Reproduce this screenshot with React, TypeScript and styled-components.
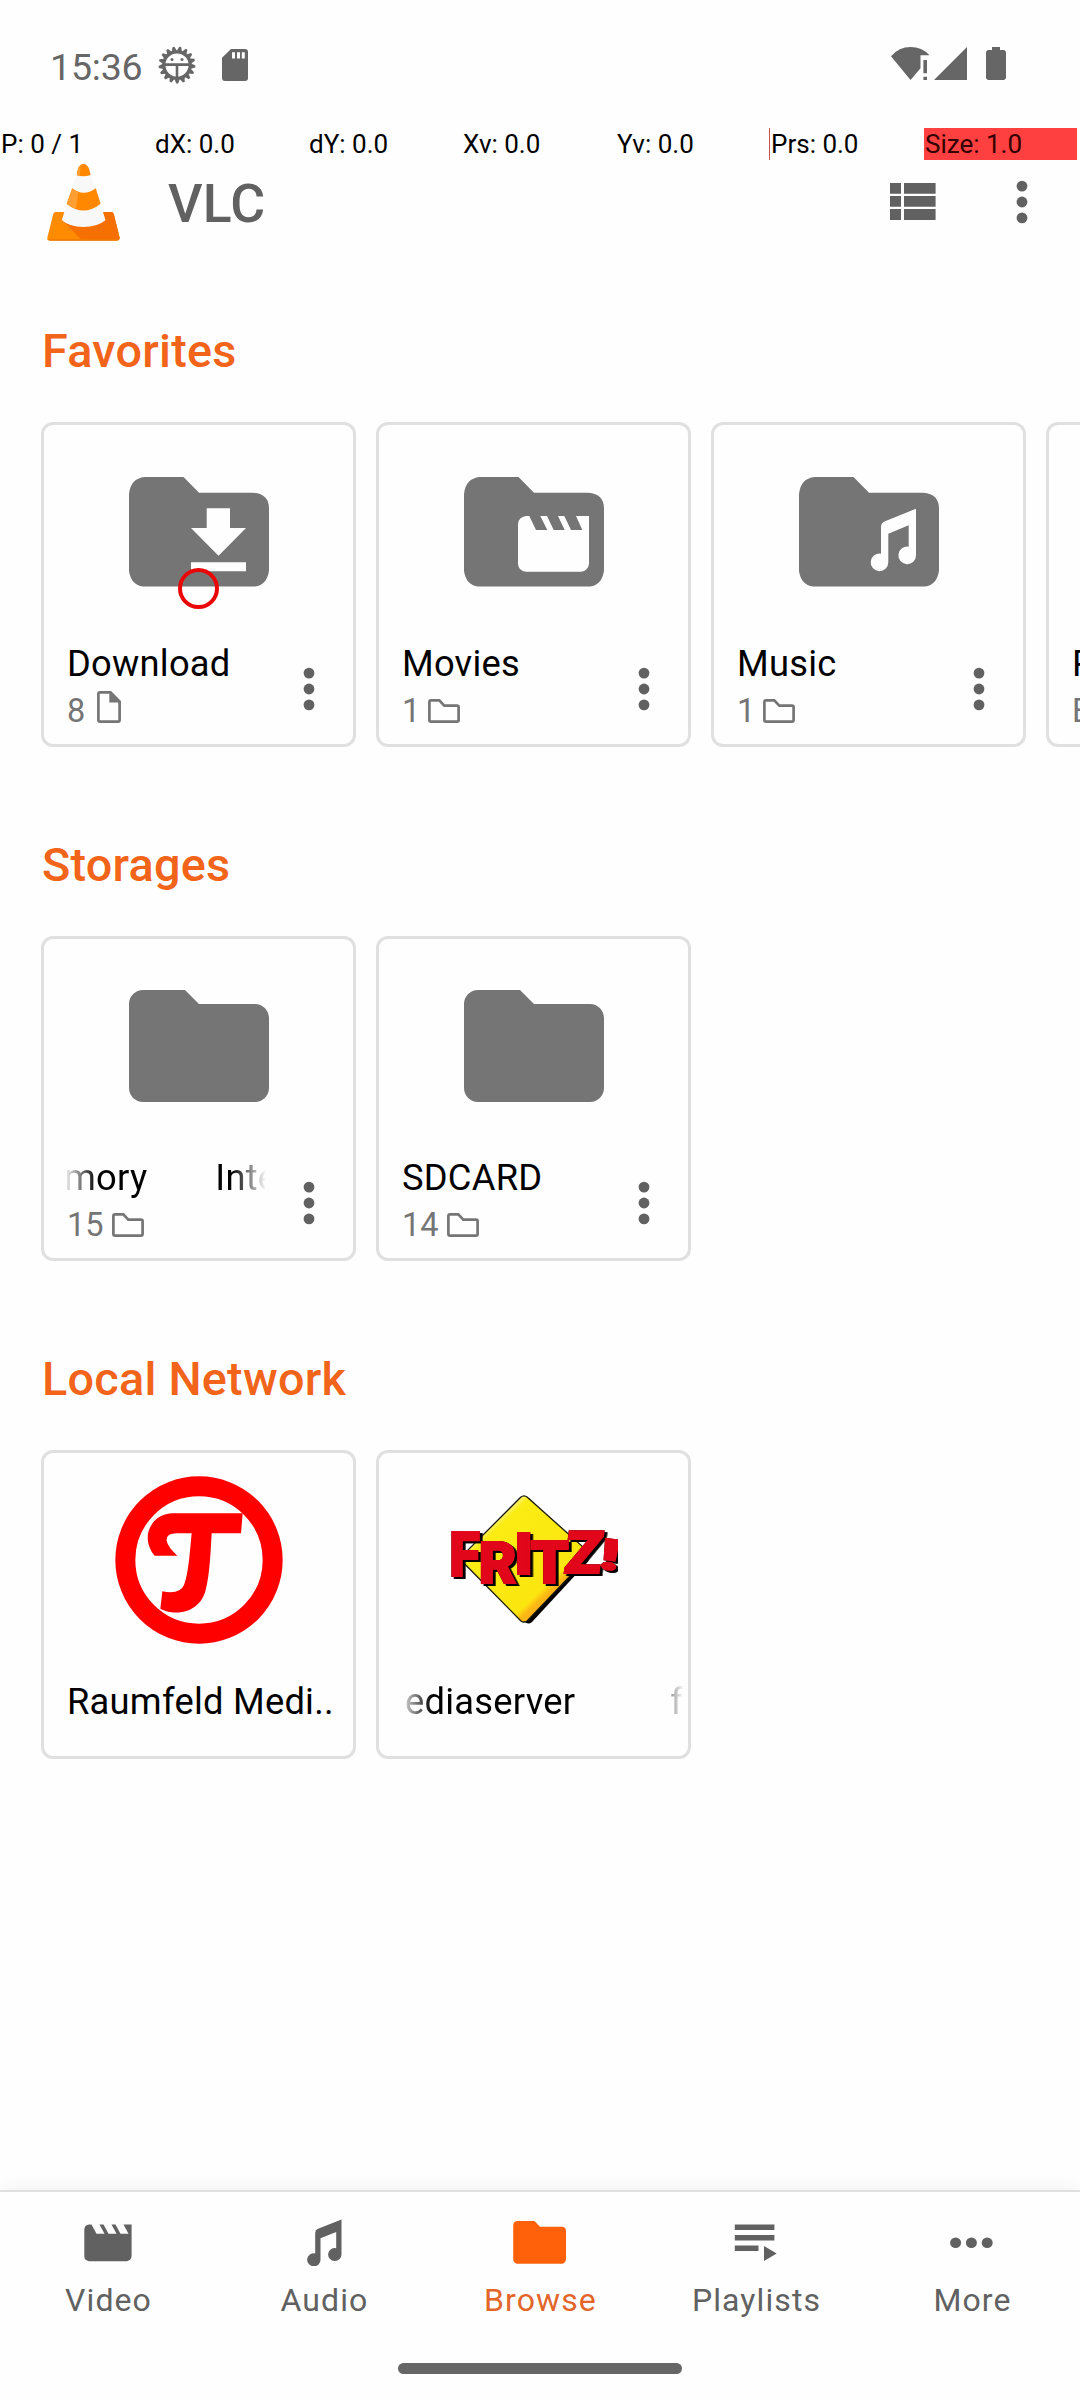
import React from 'react';
import styled, { createGlobalStyle } from 'styled-components';

const ORANGE = '#ff610a';
const GREY = '#616161';
const FOLDER_GREY = '#757575';

const GlobalStyle = createGlobalStyle`
  * { box-sizing: border-box; }
  body { margin: 0; background: #fefefe; overflow: hidden; }
  svg { display: block; flex: none; }
`;

const Screen = styled.div`
  position: relative;
  display: flex;
  flex-direction: column;
  width: 1080px;
  height: 2400px;
  overflow: hidden;
  background: #fefefe;
  font-family: Roboto, 'Noto Sans', sans-serif;
  color: #000;
`;

/* status bar */
const StatusBar = styled.header`
  display: flex;
  align-items: center;
  justify-content: space-between;
  height: 127px;
  padding: 0 74px 0 50px;
  color: #666;
`;
const StatusGroup = styled.div<{ $gap: number; $drop?: number }>`
  display: flex;
  align-items: center;
  gap: ${(p) => p.$gap}px;
  padding-top: ${(p) => p.$drop ?? 0}px;
`;
const Clock = styled.span`
  width: 93px;
  margin-right: -11px;
  padding-top: 3px;
  font-size: 37.5px;
  line-height: 46px;
  letter-spacing: -0.2px;
  white-space: nowrap;
`;
const BatterySlot = styled.span`
  display: flex;
  padding-left: 16px;
`;

/* pointer location overlay */
const PointerOverlay = styled.div`
  position: absolute;
  top: 128px;
  left: 0;
  display: flex;
  width: 1080px;
  gap: 1px;
`;
const PointerCell = styled.span<{ $fill?: boolean; $tick?: boolean }>`
  flex: 0 0 ${(p) => (p.$tick ? 154 : 153)}px;
  height: 32px;
  padding-left: 1px;
  border-left: ${(p) => (p.$tick ? '1px solid #c85050' : '0')};
  margin-left: ${(p) => (p.$tick ? -1 : 0)}px;
  background: ${(p) => (p.$fill ? '#ff4040' : 'transparent')};
  color: ${(p) => (p.$fill ? '#330000' : '#000')};
  font-size: 26px;
  line-height: 32px;
  white-space: nowrap;
`;
const TouchRing = styled.span`
  position: absolute;
  left: 178px;
  top: 567.5px;
  width: 41px;
  height: 41px;
  border: 4px solid #ea0606;
  border-radius: 50%;
`;

/* toolbar */
const Toolbar = styled.div`
  display: flex;
  align-items: center;
  height: 149px;
  padding: 0 52px 0 47px;
`;
const AppTitle = styled.h1`
  flex: 1;
  margin: 0 0 0 48px;
  padding-top: 4px;
  font-size: 53.5px;
  font-weight: 500;
  line-height: 64px;
  letter-spacing: 0.3px;
  color: ${GREY};
`;
const IconButton = styled.button`
  display: flex;
  padding: 0;
  border: 0;
  background: none;
  color: ${GREY};
  & + & { margin-left: 80px; }
`;

/* sections */
const Content = styled.main`
  flex: 1;
  padding: 45px 0 0 41px;
  overflow: hidden;
`;
const Section = styled.section`
  margin-bottom: 88px;
`;
const SectionTitle = styled.h2`
  margin: 0 0 41px;
  padding-left: 1px;
  font-size: 46.75px;
  font-weight: 500;
  line-height: 60px;
  letter-spacing: 0.25px;
  color: #f26419;
`;
const CardRow = styled.div`
  display: flex;
  gap: 20px;
`;
const Card = styled.article<{ $height: number }>`
  flex: 0 0 315px;
  display: flex;
  flex-direction: column;
  height: ${(p) => p.$height}px;
  padding-top: 23px;
  border: 3px solid #e0e0e0;
  border-radius: 12px;
  background: #fefefe;
`;
const Art = styled.div<{ $gap: number }>`
  display: flex;
  justify-content: center;
  height: 168px;
  margin-bottom: ${(p) => p.$gap}px;
  color: ${FOLDER_GREY};
`;
const Footer = styled.div`
  display: flex;
`;
const Labels = styled.div<{ $width: number }>`
  flex: 0 0 ${(p) => p.$width}px;
  width: ${(p) => p.$width}px;
  margin-left: 23px;
  overflow: hidden;
`;
const Name = styled.div<{ $fade?: boolean }>`
  display: flex;
  font-size: 36.3px;
  line-height: 44px;
  letter-spacing: 0.25px;
  white-space: pre;
  overflow: hidden;
  ${(p) =>
    p.$fade &&
    `mask-image: linear-gradient(to right, rgba(0,0,0,.1), #000 30px, #000 calc(100% - 34px), transparent);`}
`;
const Loop = styled.span<{ $shift: number; $gap: number }>`
  flex: none;
  margin-left: ${(p) => p.$shift}px;
  margin-right: ${(p) => p.$gap}px;
`;
const Count = styled.div`
  display: flex;
  align-items: flex-end;
  gap: 8px;
  margin-top: 5px;
  height: 40px;
  font-size: 32.5px;
  line-height: 40px;
  color: ${FOLDER_GREY};
  svg { margin-bottom: 8px; }
`;
const CardMenu = styled.button`
  display: flex;
  align-items: center;
  justify-content: center;
  width: 86px;
  height: 93px;
  padding: 0;
  border: 0;
  background: none;
  color: ${GREY};
`;

/* bottom navigation */
const BottomNav = styled.nav`
  display: flex;
  height: 210px;
  border-top: 2px solid #dedfde;
  box-shadow: 0 -4px 14px rgba(0, 0, 0, 0.045);
  background: #fefefe;
`;
const NavItem = styled.a<{ $active?: boolean }>`
  flex: 1;
  display: flex;
  flex-direction: column;
  align-items: center;
  padding-top: 17.5px;
  color: ${(p) => (p.$active ? ORANGE : GREY)};
`;
const NavLabel = styled.span<{ $active?: boolean }>`
  margin-top: 14.5px;
  padding-left: 1px;
  font-size: 32px;
  line-height: 40px;
  letter-spacing: 1.1px;
  color: ${(p) => (p.$active ? '#e2662a' : 'inherit')};
`;
const HomePill = styled.span`
  position: absolute;
  left: 398px;
  bottom: 26px;
  width: 284px;
  height: 11px;
  border-radius: 6px;
  background: #666;
`;

const Dots = () => (
  <svg width="12" height="44" viewBox="0 0 12 44" fill="currentColor">
    <circle cx="6" cy="6.1" r="5.4" />
    <circle cx="6" cy="22" r="5.4" />
    <circle cx="6" cy="37.9" r="5.4" />
  </svg>
);

const TEETH = Array.from({ length: 17 }, (_, i) => i);

const DebugGear = () => (
  <svg width="38" height="38" viewBox="-19 -19 38 38">
    {TEETH.map((i) => (
      <path key={i} d="M-2.6-14L-1-18.4H1L2.6-14Z" fill="currentColor" transform={`rotate(${(i * 360) / 17 + 10})`} />
    ))}
    <circle r="13.2" fill="none" stroke="currentColor" strokeWidth="3.2" />
    <path d="M-13-.4H13M0-.4V13" stroke="currentColor" strokeWidth="2.6" fill="none" />
    <circle cx="-5" cy="-5.4" r="1.5" fill="currentColor" />
    <circle cx="5" cy="-5.4" r="1.5" fill="currentColor" />
  </svg>
);

const SdCard = () => (
  <svg width="26" height="32" viewBox="0 0 26 33" preserveAspectRatio="none">
    <path fill="currentColor" d="M9 0H23Q26 0 26 3V30Q26 33 23 33H3Q0 33 0 30V9Z" />
    <path fill="#fefefe" d="M10 3.3h3v6.5h-3zM15 3.3h3v6.5h-3zM19.8 3.3h3v6.5h-3z" />
  </svg>
);

const Wifi = () => (
  <svg width="39" height="33" viewBox="0 0 39 34" preserveAspectRatio="none" fill="currentColor">
    <path d="M0 9.5Q8 0 19.5 0T38.5 8.5H29.500V22L19.500 34Z" />
    <path d="M32.400 13.500h3.600v13.500h-3.600zM32.400 30.600h3.600v3.400h-3.600z" />
  </svg>
);

const Signal = () => (
  <svg width="33" height="33" viewBox="0 0 33 33" fill="currentColor">
    <path d="M33 0V33H0Z" />
  </svg>
);

const Battery = () => (
  <svg width="20" height="33" viewBox="0 0 20 34" preserveAspectRatio="none" fill="currentColor">
    <path d="M6 0h8v3.200h4.200l1.800 1.600v27.400l-1.800 1.800H1.800L0 32.200V4.800l1.800-1.600H6z" />
  </svg>
);

const Cone = () => (
  <svg width="73" height="78" viewBox="138 426 211 234" preserveAspectRatio="none">
    <path fill="#ff8b00" d="M163 573H325Q329 573 331 579L348 650Q349 659 340 659H147Q137 659 139 650L156 579Q158 573 163 573Z" />
    <path fill="#f57000" d="M181 596L236 655H342Q349 656 348 650L331 579Q329 573 325 573H300Z" />
    <path fill="#e57300" d="M140 655H347L341 659.5H146Z" opacity=".7" />
    <path fill="#f8f8f8" d="M224 463H264L278 502 293 548 307 598Q284 618 243 618 203 618 181 598L195 548 211 502Z" />
    <path fill="#ff8800" d="M224 462Q228 428 243 428 259 428 264 462 243 470 224 462Z" />
    <path fill="#ff8800" d="M211 502Q243 529 279 502L293 548Q243 589 195 548Z" />
    <path fill="#ff9e33" d="M211 502Q219 510 229 512L222 563Q207 560 195 548ZM224 462Q227 437 235 431L233 466Z" />
  </svg>
);

const ListIcon = () => (
  <svg width="46" height="37" viewBox="0 0 46 37" fill="currentColor">
    <path d="M0 0h11v10.700H0zM14 0h31.600v10.700H14zM0 13h11v10.700H0zM14 13h31.600v10.700H14zM0 26h11v11H0zM14 26h31.600v11H14z" />
  </svg>
);

const FAVORITE_FOLDER =
  'M29.6 29H68.5L84 44.7H138.4Q154 46 154 60.4V122.5Q152 137 140 138.5H28Q16 137 14 123V46Q15.5 30.5 29.6 29Z';

const FavoriteFolder = ({ children }: { children?: React.ReactNode }) => (
  <svg width="168" height="168" viewBox="0 0 168 168">
    <path d={FAVORITE_FOLDER} fill="currentColor" />
    <g transform="translate(14 29)" fill="#fefefe">
      {children}
    </g>
  </svg>
);

const DownloadArt = () => (
  <FavoriteFolder>
    <path d="M77.7 31.3H101V51H117L89.5 78.7 62 51H77.7ZM62 85.3H117V94.3H62Z" />
  </FavoriteFolder>
);
const MoviesArt = () => (
  <FavoriteFolder>
    <path d="M62 39H65.3L72 53H83.3L76.3 39H83L89.7 53H100.7L94 39H100.3L107 53H118.3L112 39H125V87Q124 94 117 94.7H62Q54.5 94 54 87V47Q54.5 40 62 39Z" />
  </FavoriteFolder>
);
const MusicArt = () => (
  <FavoriteFolder>
    <path d="M117 31.7V78.3A8.8 8.8 0 1 1 109.7 69.7V48.3L89.3 56.7V85.3A8.8 8.8 0 1 1 82 76.7V50Q82 46 86 44.3Z" />
  </FavoriteFolder>
);
const FolderArt = () => (
  <svg width="168" height="168" viewBox="0 0 24 24" fill="currentColor">
    <path d="M10 4H4c-1.1 0-2 .9-2 2v12c0 1.100.9 2 2 2h16c1.100 0 2-.9 2-2V8c0-1.100-.9-2-2-2h-8z" />
  </svg>
);

const TeufelArt = () => (
  <svg width="168" height="168" viewBox="345 408 504 504">
    <circle cx="597" cy="660" r="221" fill="none" stroke="#f00" strokeWidth="60" />
    <path
      fill="#f00"
      d="M520 520H728L723 580H635C632 630 630 700 617 750C605 800 560 822 515 817Q492 813 481 806L487 754Q540 764 552 735C566 700 570 630 575 580H530Q498 580 500 602Q503 620 532 647L464 647C440 620 440 585 448 568Q466 522 520 520Z"
    />
  </svg>
);

type Glyph = { c: string; x: number; y: number; size: number; w: number; t?: string };
const FRITZ: Glyph[] = [
  { c: 'F', x: 268, y: 437, size: 186, w: 92 },
  { c: 'R', x: 356, y: 460, size: 172, w: 114 },
  { c: 'I', x: 462, y: 431, size: 170, w: 58 },
  { c: 'T', x: 511, y: 460, size: 178, w: 116 },
  { c: 'Z', x: 608, y: 429, size: 176, w: 112, t: 'skewX(-7)' },
  { c: '!', x: 716, y: 414, size: 126, w: 56, t: 'rotate(8)' },
];

const FritzWord = styled.g`
  font-family: Roboto, sans-serif;
  font-weight: 900;
  fill: #e2061a;
  stroke: #e2061a;
  stroke-width: 6px;
  filter: drop-shadow(0 0 1px #300) drop-shadow(8px 6px 0 #000);
`;

const FritzArt = () => (
  <svg width="168" height="168" viewBox="270 138 504 504">
    <defs>
      <linearGradient id="diamond" x1="0.2" y1="0.2" x2="0.75" y2="0.8">
        <stop offset="0" stopColor="#fffbc8" />
        <stop offset="0.12" stopColor="#fbec14" />
        <stop offset="0.86" stopColor="#fbe60f" />
        <stop offset="0.93" stopColor="#fdb515" />
      </linearGradient>
    </defs>
    <path d="M507 204L686 392 516 576Q504 586 492 574Z" fill="#000" />
    <path
      d="M482 202Q492 193 502 202L670 352Q682 370 668 398L502 572Q492 580 482 572L312 400Q302 385 314 370Z"
      fill="url(#diamond)"
      stroke="#1a1a10"
      strokeWidth="4"
    />
    <FritzWord>
      {FRITZ.map((g) => (
        <g key={g.c} transform={`translate(${g.x} ${g.y}) ${g.t ?? ''}`}>
          <text fontSize={g.size} textLength={g.w} lengthAdjust="spacingAndGlyphs">
            {g.c}
          </text>
        </g>
      ))}
    </FritzWord>
  </svg>
);

const SmallFile = () => (
  <svg width="28" height="32" viewBox="-4 0 28 32">
    <path d="M3 1.400H13.500L22.600 10.500V29Q22.600 30.600 21 30.600H3Q1.400 30.600 1.400 29V3Q1.400 1.400 3 1.400Z" fill="none" stroke="currentColor" strokeWidth="2.7" />
    <path d="M12.300 1.500V11.500H23Z" fill="currentColor" />
  </svg>
);
const SmallFolder = () => (
  <svg width="32" height="24" viewBox="0 0 32 24">
    <path
      d="M3 1.400H11.300L16.300 6.600H29Q30.600 6.600 30.600 8V21Q30.600 22.600 29 22.600H3Q1.400 22.600 1.400 21V3Q1.400 1.400 3 1.400Z"
      fill="none"
      stroke="currentColor"
      strokeWidth="2.7"
    />
  </svg>
);

type Place = {
  name: string;
  art: React.ReactNode;
  count: string;
  unit?: React.ReactNode;
  marquee?: { shift: number; gap: number };
};

const favorites: Place[] = [
  { name: 'Download', art: <DownloadArt />, count: '8', unit: <SmallFile /> },
  { name: 'Movies', art: <MoviesArt />, count: '1', unit: <SmallFolder /> },
  { name: 'Music', art: <MusicArt />, count: '1', unit: <SmallFolder /> },
  { name: 'Podcasts', art: <FavoriteFolder />, count: 'Empty' },
];
const storages: Place[] = [
  { name: 'mory', art: <FolderArt />, count: '15', unit: <SmallFolder />, marquee: { shift: -3, gap: 68 } },
  { name: 'SDCARD', art: <FolderArt />, count: '14', unit: <SmallFolder /> },
];

const PlaceCard = ({ place }: { place: Place }) => (
  <Card $height={325}>
    <Art $gap={26}>{place.art}</Art>
    <Footer>
      <Labels $width={199}>
        {place.marquee ? (
          <Name $fade>
            <Loop $shift={place.marquee.shift} $gap={place.marquee.gap}>
              {place.name}
            </Loop>
            <span>Inte</span>
          </Name>
        ) : (
          <Name>{place.name}</Name>
        )}
        <Count>
          {place.count}
          {place.unit}
        </Count>
      </Labels>
      <CardMenu aria-label="More options">
        <Dots />
      </CardMenu>
    </Footer>
  </Card>
);

const NavIcon = styled.svg.attrs({
  width: 58,
  height: 56,
  viewBox: '0 0 58 58',
  preserveAspectRatio: 'none',
  fill: 'currentColor',
})``;

const VideoIcon = () => (
  <NavIcon>
    <path d="M10 15H12.500L17.500 24.500H25.500L20.500 15H24.500L29.500 24.500H37.500L32.500 15H36.500L41.500 24.500H49.500L44.500 15H52.600V48Q52 52.500 48 53H10Q5.500 52.500 5.300 48V20Q5.500 15.500 10 15Z" />
  </NavIcon>
);
const AudioIcon = () => (
  <NavIcon>
    <path d="M46.500 9.800V45.600A6.700 6.700 0 1 1 41.200 39.500V22.800L25.500 29.200V51A6.700 6.700 0 1 1 20.200 45V23.500Q20.200 20.600 23 19.500Z" />
  </NavIcon>
);
const BrowseIcon = () => (
  <NavIcon>
    <path d="M6 11.500H23.500L29 17.300H51Q54.700 17.500 55 21.500V51Q54.700 55 51 55.600H6Q2.500 55 2.200 51V16Q2.500 12 6 11.500Z" />
  </NavIcon>
);
const PlaylistIcon = () => (
  <NavIcon>
    <path d="M7.800 15H47.400V20.700H7.800zM7.800 26H47.400V31.500H7.800zM7.800 36.800H31.500V42.400H7.800zM37 37.200L49.700 45 37 52.800Z" />
  </NavIcon>
);
const MoreIcon = () => (
  <NavIcon>
    <circle cx="12.600" cy="33.900" r="5.500" />
    <circle cx="28.400" cy="33.900" r="5.500" />
    <circle cx="44.200" cy="33.900" r="5.500" />
  </NavIcon>
);

const tabs = [
  { label: 'Video', icon: <VideoIcon /> },
  { label: 'Audio', icon: <AudioIcon /> },
  { label: 'Browse', icon: <BrowseIcon />, active: true },
  { label: 'Playlists', icon: <PlaylistIcon /> },
  { label: 'More', icon: <MoreIcon /> },
];

export default function App() {
  return (
    <Screen>
      <GlobalStyle />
      <StatusBar>
        <StatusGroup $gap={26} $drop={3}>
          <Clock>15:36</Clock>
          <DebugGear />
          <SdCard />
        </StatusGroup>
        <StatusGroup $gap={3.5}>
          <Wifi />
          <Signal />
          <BatterySlot>
            <Battery />
          </BatterySlot>
        </StatusGroup>
      </StatusBar>

      <Toolbar>
        <Cone />
        <AppTitle>VLC</AppTitle>
        <IconButton aria-label="Display as list">
          <ListIcon />
        </IconButton>
        <IconButton aria-label="More options">
          <Dots />
        </IconButton>
      </Toolbar>

      <Content>
        <Section>
          <SectionTitle>Favorites</SectionTitle>
          <CardRow>
            {favorites.map((p) => (
              <PlaceCard key={p.name} place={p} />
            ))}
          </CardRow>
        </Section>
        <Section>
          <SectionTitle>Storages</SectionTitle>
          <CardRow>
            {storages.map((p) => (
              <PlaceCard key={p.name} place={p} />
            ))}
          </CardRow>
        </Section>
        <Section>
          <SectionTitle>Local Network</SectionTitle>
          <CardRow>
            <Card $height={309}>
              <Art $gap={36}>
                <TeufelArt />
              </Art>
              <Labels $width={282}>
                <Name>Raumfeld Medi..</Name>
              </Labels>
            </Card>
            <Card $height={309}>
              <Art $gap={36}>
                <FritzArt />
              </Art>
              <Labels $width={282}>
                <Name $fade>
                  <Loop $shift={3} $gap={95}>
                    ediaserver
                  </Loop>
                  <span>f</span>
                </Name>
              </Labels>
            </Card>
          </CardRow>
        </Section>
      </Content>

      <BottomNav>
        {tabs.map((t) => (
          <NavItem key={t.label} $active={t.active}>
            {t.icon}
            <NavLabel $active={t.active}>{t.label}</NavLabel>
          </NavItem>
        ))}
      </BottomNav>

      <HomePill />
      <PointerOverlay>
        <PointerCell>P: 0 / 1</PointerCell>
        <PointerCell>dX: 0.0</PointerCell>
        <PointerCell>dY: 0.0</PointerCell>
        <PointerCell>Xv: 0.0</PointerCell>
        <PointerCell>Yv: 0.0</PointerCell>
        <PointerCell $tick>Prs: 0.0</PointerCell>
        <PointerCell $fill>Size: 1.0</PointerCell>
      </PointerOverlay>
      <TouchRing />
    </Screen>
  );
}
